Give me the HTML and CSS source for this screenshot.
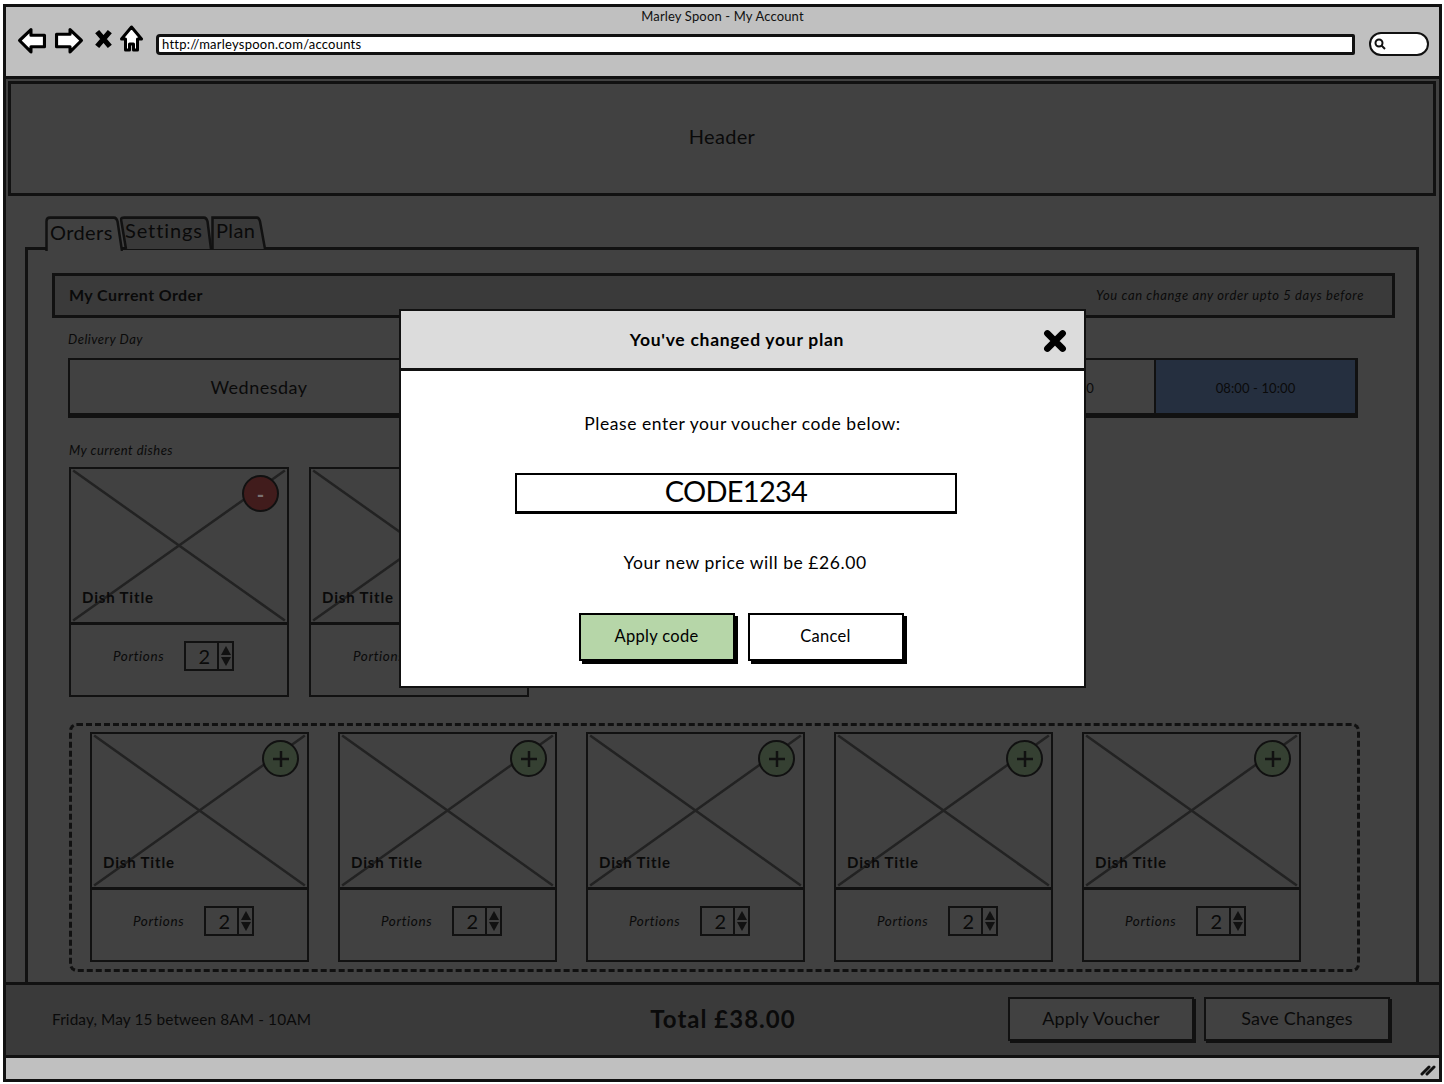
FILE: index.html
```html
<!DOCTYPE html>
<html lang="en">
<head>
<meta charset="utf-8">
<title>Marley Spoon - My Account</title>
<link rel="stylesheet" href="styles.css">
</head>
<body>
<div class="window">
  <header class="browser">
    <div class="browser-title">Marley Spoon - My Account</div>
    <div class="browser-row">
      <svg class="nav-icon back" viewBox="0 0 28 26"><path d="M2 13 13 2.500V8H26V19H13V24Z"/></svg>
      <svg class="nav-icon forward" viewBox="0 0 28 26"><path d="M26 13 15 2.500V7H2V19H15V24Z"/></svg>
      <svg class="nav-icon stop" viewBox="0 0 18 20"><path class="cross" d="M3 3 15 17M15 3 3 17"/></svg>
      <svg class="nav-icon home" viewBox="0 0 24 28"><path d="M12 2 22 14H18V25H14V19H10V25H6V14H2Z"/></svg>
      <div class="url">http://marleyspoon.com/accounts</div>
      <div class="search"><svg class="search-icon" viewBox="0 0 14 14"><circle cx="6" cy="6" r="3.500"/><path d="M8.500 8.500 12 12"/></svg></div>
    </div>
  </header>

  <main class="page">
    <div class="site-header">Header</div>

    <nav class="tabs">
      <div class="tab tab-orders"><svg class="tab-shape" viewBox="0 0 78 33" preserveAspectRatio="none"><path d="M1.500 33V5Q1.500 1.500 5 1.500H69Q71.500 1.500 72.500 5L77 33"/></svg><span class="tab-label">Orders</span></div>
      <div class="tab tab-settings"><svg class="tab-shape" viewBox="0 0 92 31" preserveAspectRatio="none"><path d="M6 31 1 3Q1 1.500 4 1.500H84Q86.500 1.500 87.500 5L91 31"/></svg><span class="tab-label">Settings</span></div>
      <div class="tab tab-plan"><svg class="tab-shape" viewBox="0 0 55 31" preserveAspectRatio="none"><path d="M1.500 31V1.500H46Q48 1.500 49 5L54 31"/></svg><span class="tab-label">Plan</span></div>
    </nav>

    <section class="panel">
      <div class="order-bar">
        <strong class="order-title">My Current Order</strong>
        <em class="order-note">You can change any order upto 5 days before</em>
      </div>

      <div class="field-label delivery-label">Delivery Day</div>
      <div class="day-row">
        <div class="segment seg-day">Wednesday</div>
        <div class="segment seg-mid">Thursday</div>
        <div class="segment seg-time">06:00 - 08:00</div>
        <div class="segment seg-active">08:00 - 10:00</div>
      </div>

      <div class="field-label dishes-label">My current dishes</div>
      <div class="current-dishes">
        <article class="dish dish-wide">
          <div class="dish-image">
            <svg class="placeholder" viewBox="0 0 100 100" preserveAspectRatio="none"><path d="M1 1 99 99M99 1 1 99"/></svg>
            <span class="badge badge-remove">-</span>
            <span class="dish-title">Dish Title</span>
          </div>
          <div class="dish-foot"><em class="portions">Portions</em><div class="spinner"><span class="spin-value">2</span><span class="spin-arrows"><i class="up"></i><i class="down"></i></span></div></div>
        </article>
        <article class="dish dish-wide">
          <div class="dish-image">
            <svg class="placeholder" viewBox="0 0 100 100" preserveAspectRatio="none"><path d="M1 1 99 99M99 1 1 99"/></svg>
            <span class="dish-title">Dish Title</span>
          </div>
          <div class="dish-foot"><em class="portions">Portions</em><div class="spinner"><span class="spin-value">2</span><span class="spin-arrows"><i class="up"></i><i class="down"></i></span></div></div>
        </article>
      </div>

      <div class="more-dishes">
        <article class="dish">
          <div class="dish-image">
            <svg class="placeholder" viewBox="0 0 100 100" preserveAspectRatio="none"><path d="M1 1 99 99M99 1 1 99"/></svg>
            <span class="badge badge-add"><svg class="plus" viewBox="0 0 18 18"><path d="M9 1V17M1 9H17"/></svg></span>
            <span class="dish-title">Dish Title</span>
          </div>
          <div class="dish-foot"><em class="portions">Portions</em><div class="spinner"><span class="spin-value">2</span><span class="spin-arrows"><i class="up"></i><i class="down"></i></span></div></div>
        </article>
        <article class="dish">
          <div class="dish-image">
            <svg class="placeholder" viewBox="0 0 100 100" preserveAspectRatio="none"><path d="M1 1 99 99M99 1 1 99"/></svg>
            <span class="badge badge-add"><svg class="plus" viewBox="0 0 18 18"><path d="M9 1V17M1 9H17"/></svg></span>
            <span class="dish-title">Dish Title</span>
          </div>
          <div class="dish-foot"><em class="portions">Portions</em><div class="spinner"><span class="spin-value">2</span><span class="spin-arrows"><i class="up"></i><i class="down"></i></span></div></div>
        </article>
        <article class="dish">
          <div class="dish-image">
            <svg class="placeholder" viewBox="0 0 100 100" preserveAspectRatio="none"><path d="M1 1 99 99M99 1 1 99"/></svg>
            <span class="badge badge-add"><svg class="plus" viewBox="0 0 18 18"><path d="M9 1V17M1 9H17"/></svg></span>
            <span class="dish-title">Dish Title</span>
          </div>
          <div class="dish-foot"><em class="portions">Portions</em><div class="spinner"><span class="spin-value">2</span><span class="spin-arrows"><i class="up"></i><i class="down"></i></span></div></div>
        </article>
        <article class="dish">
          <div class="dish-image">
            <svg class="placeholder" viewBox="0 0 100 100" preserveAspectRatio="none"><path d="M1 1 99 99M99 1 1 99"/></svg>
            <span class="badge badge-add"><svg class="plus" viewBox="0 0 18 18"><path d="M9 1V17M1 9H17"/></svg></span>
            <span class="dish-title">Dish Title</span>
          </div>
          <div class="dish-foot"><em class="portions">Portions</em><div class="spinner"><span class="spin-value">2</span><span class="spin-arrows"><i class="up"></i><i class="down"></i></span></div></div>
        </article>
        <article class="dish">
          <div class="dish-image">
            <svg class="placeholder" viewBox="0 0 100 100" preserveAspectRatio="none"><path d="M1 1 99 99M99 1 1 99"/></svg>
            <span class="badge badge-add"><svg class="plus" viewBox="0 0 18 18"><path d="M9 1V17M1 9H17"/></svg></span>
            <span class="dish-title">Dish Title</span>
          </div>
          <div class="dish-foot"><em class="portions">Portions</em><div class="spinner"><span class="spin-value">2</span><span class="spin-arrows"><i class="up"></i><i class="down"></i></span></div></div>
        </article>
      </div>
    </section>

    <footer class="summary">
      <div class="summary-date">Friday, May 15 between 8AM - 10AM</div>
      <div class="summary-total">Total £38.00</div>
      <div class="summary-actions">
        <div class="dark-btn">Apply Voucher</div>
        <div class="dark-btn">Save Changes</div>
      </div>
    </footer>
  </main>

  <div class="statusbar"><svg class="resize" viewBox="0 0 16 14"><path d="M2 12 9 5M7 12 14 5"/></svg></div>
</div>

<div class="modal">
  <div class="modal-head">
    <strong class="modal-title">You've changed your plan</strong>
    <svg class="modal-close" viewBox="0 0 22 22"><path d="M4 4 18 18M18 4 4 18"/></svg>
  </div>
  <div class="modal-body">
    <p class="modal-text prompt">Please enter your voucher code below:</p>
    <div class="code-input">CODE1234</div>
    <p class="modal-text price">Your new price will be £26.00</p>
    <div class="modal-actions">
      <div class="modal-btn apply">Apply code</div>
      <div class="modal-btn cancel">Cancel</div>
    </div>
  </div>
</div>
</body>
</html>
```
FILE: styles.css
```css
* { box-sizing: border-box; }
html, body { margin: 0; padding: 0; }
body {
  position: relative;
  width: 1444px;
  height: 1084px;
  overflow: hidden;
  background: #fff;
  color: #0a0a0a;
  font-family: Lato, "Open Sans", sans-serif;
}

.window {
  display: flex;
  flex-direction: column;
  width: 1439px;
  height: 1078px;
  margin: 4px 0 0 3px;
  border: 3px solid #111;
  background: #414141;
}

/* Browser chrome */
.browser {
  flex: 0 0 72px;
  background: #c0c0c0;
  border-bottom: 3px solid #111;
}
.browser-title {
  height: 20px;
  padding-top: 1px;
  text-align: center;
  font-size: 13px;
  line-height: 17px;
  letter-spacing: .15px;
  color: #111;
}
.browser-row {
  display: flex;
  align-items: center;
  height: 32px;
  padding-left: 11px;
}
.nav-icon { display: block; fill: #fff; stroke: #000; stroke-width: 3; stroke-linejoin: round; }
.back { width: 30px; height: 27px; margin-bottom: 6px; }
.forward { width: 30px; height: 27px; margin-left: 7px; margin-bottom: 6px; }
.stop { width: 19px; height: 22px; margin-left: 10px; margin-bottom: 8px; }
.stop .cross { fill: none; stroke-width: 5; }
.home { width: 25px; height: 28px; margin-left: 6px; margin-top: -3px; margin-bottom: 6px; }
.url {
  width: 1199px;
  height: 21px;
  margin-left: 12px;
  margin-top: 2px;
  padding-left: 3px;
  border: 3px solid #111;
  border-radius: 4px 2px 2px 4px;
  background: #fff;
  font-size: 13px;
  line-height: 15px;
  letter-spacing: .24px;
  color: #000;
}
.search {
  display: flex;
  align-items: center;
  width: 60px;
  height: 24px;
  margin-left: 14px;
  margin-top: 2px;
  padding-left: 2px;
  border: 2px solid #111;
  border-radius: 12px;
  background: #fff;
}
.search-icon { width: 14px; height: 14px; fill: none; stroke: #111; stroke-width: 2; }

/* Dimmed page */
.page {
  flex: 1;
  display: flex;
  flex-direction: column;
  min-height: 0;
  padding-top: 2px;
}
.site-header {
  flex: 0 0 115px;
  margin: 0 3px 0 2px;
  border: 3px solid #111;
  text-align: center;
  font-size: 20px;
  line-height: 105px;
  letter-spacing: .3px;
}

.tabs {
  display: flex;
  align-items: flex-end;
  height: 34px;
  margin: 19px 0 0 39px;
  position: relative;
  z-index: 1;
}
.tab { position: relative; height: 33px; font-size: 20px; letter-spacing: .4px; }
.tab-shape { position: absolute; left: 0; top: 0; width: 100%; height: 100%; display: block; stroke: #111; stroke-width: 2.500; }
.tab-label { position: relative; display: block; padding-left: 5px; line-height: 29px; }
.tab-orders { width: 78px; height: 35px; margin-bottom: -2px; }
.tab-orders .tab-label { padding-top: 2px; }
.tab-orders .tab-shape { fill: #414141; }
.tab-settings { width: 92px; margin-left: -3px; letter-spacing: .9px; }
.tab-plan { width: 55px; margin-left: -1px; }
.tab-settings .tab-shape, .tab-plan .tab-shape { fill: #393939; }

.panel {
  flex: 1;
  min-height: 0;
  overflow: hidden;
  margin: -2px 20px 0 19px;
  padding: 23px 21px 0 24px;
  border: 3px solid #111;
  border-bottom: 0;
}

.order-bar {
  display: flex;
  justify-content: space-between;
  align-items: center;
  height: 45px;
  padding: 0 28px 2px 14px;
  border: 3px solid #111;
  background: #3a3a3a;
}
.order-title { font-size: 16px; font-weight: 700; letter-spacing: .4px; }
.order-note { font-size: 13px; letter-spacing: .62px; }

.field-label { font-size: 13px; line-height: 16px; font-style: italic; margin-left: 16px; letter-spacing: .5px; }
.delivery-label { margin-top: 13px; }
.dishes-label { margin-top: 24px; margin-left: 17px; }

.day-row {
  display: flex;
  width: 1290px;
  height: 60px;
  margin: 11px 0 0 16px;
  border: 2px solid #111;
  border-bottom-width: 5px;
  border-right-width: 3px;
}
.segment {
  display: flex;
  align-items: center;
  justify-content: center;
  padding-top: 2px;
  border-right: 2px solid #111;
  font-size: 13px;
  letter-spacing: .1px;
}
.seg-day { width: 380px; font-size: 18px; letter-spacing: .5px; padding-top: 1px; }
.seg-mid { width: 504px; }
.seg-time { width: 202px; }
.seg-active { flex: 1; background: #252f3f; border-right: 0; }

.current-dishes {
  display: flex;
  gap: 20px;
  margin: 9px 0 0 17px;
}
.more-dishes {
  display: flex;
  gap: 29px;
  width: 1291px;
  height: 249px;
  margin: 26px 0 0 17px;
  padding: 6px 0 0 18px;
  border: 3px dashed #111;
  border-radius: 8px;
}

.dish {
  display: flex;
  flex-direction: column;
  width: 219px;
  height: 230px;
  border: 2px solid #111;
}
.dish-wide { width: 220px; }
.dish-wide .dish-foot { padding-left: 42px; }
.dish-image {
  position: relative;
  flex: 0 0 156px;
  height: 156px;
  border-bottom: 3px solid #111;
}
.placeholder { display: block; width: 100%; height: 153px; fill: none; stroke: #222; }
.placeholder path { stroke-width: 2.500; vector-effect: non-scaling-stroke; }
.dish-title {
  position: absolute;
  left: 11px;
  bottom: 16px;
  font-size: 15px;
  font-weight: 700;
  line-height: 18px;
  letter-spacing: .85px;
}
.badge {
  position: absolute;
  top: 6px;
  right: 8px;
  display: flex;
  align-items: center;
  justify-content: center;
  width: 37px;
  height: 37px;
  border: 2px solid #111;
  border-radius: 50%;
}
.badge-remove { background: #411c1c; color: #7a7272; font-size: 20px; font-weight: 700; line-height: 1; }
.badge-add { background: #354032; }
.plus { width: 18px; height: 18px; stroke: #111; stroke-width: 2.500; fill: none; }

.dish-foot {
  flex: 1;
  display: flex;
  align-items: center;
  padding: 0 0 8px 41px;
}
.portions { width: 71px; font-size: 13.500px; letter-spacing: .6px; }
.spinner {
  display: flex;
  width: 50px;
  height: 30px;
  border: 2px solid #111;
}
.spin-value { flex: 1; text-align: right; padding-right: 7px; font-size: 20px; line-height: 26px; }
.spin-arrows {
  display: flex;
  flex-direction: column;
  align-items: center;
  justify-content: center;
  gap: 2px;
  width: 15px;
  border-left: 2px solid #111;
}
.up, .down { display: block; width: 0; height: 0; border-left: 5px solid transparent; border-right: 5px solid transparent; }
.up { border-bottom: 9px solid #111; }
.down { border-top: 9px solid #111; }

/* Summary bar */
.summary {
  flex: 0 0 76px;
  display: grid;
  grid-template-columns: 1fr auto 1fr;
  align-items: center;
  padding: 0 49px 3px 46px;
  background: #3a3a3a;
  border-top: 3px solid #111;
  border-bottom: 3px solid #111;
}
.summary-date { font-size: 15.400px; letter-spacing: .1px; }
.summary-total { font-size: 24px; font-weight: 700; letter-spacing: 1px; margin-left: 4px; }
.summary-actions { display: flex; justify-content: flex-end; gap: 10px; }
.dark-btn {
  width: 186px;
  height: 44px;
  border: 2px solid #111;
  background: #414141;
  box-shadow: 2px 2px 0 #111;
  text-align: center;
  font-size: 18px;
  line-height: 38px;
  letter-spacing: .2px;
}

.statusbar {
  flex: 0 0 21px;
  display: flex;
  justify-content: flex-end;
  align-items: center;
  padding-right: 3px;
  background: #c0c0c0;
}
.resize { width: 16px; height: 14px; fill: none; stroke: #111; stroke-width: 3; stroke-linecap: round; }

/* Modal */
.modal {
  position: absolute;
  left: 399px;
  top: 309px;
  width: 687px;
  height: 379px;
  display: flex;
  flex-direction: column;
  border: 2px solid #111;
  background: #fff;
  color: #000;
}
.modal-head {
  position: relative;
  flex: 0 0 60px;
  display: flex;
  align-items: center;
  justify-content: center;
  padding-right: 11px;
  background: #dcdcdc;
  border-bottom: 3px solid #111;
}
.modal-title { font-size: 17.500px; font-weight: 700; letter-spacing: .72px; }
.modal-close { position: absolute; right: 17px; top: 18px; width: 24px; height: 24px; fill: none; stroke: #000; stroke-width: 6; stroke-linecap: round; }
.modal-body {
  flex: 1;
  display: flex;
  flex-direction: column;
  align-items: center;
}
.modal-text { margin: 0; font-size: 17.500px; line-height: 22px; letter-spacing: .56px; }
.prompt { margin-top: 42px; }
.code-input {
  width: 442px;
  height: 41px;
  margin-top: 38px;
  margin-right: 13px;
  border: 2px solid #000;
  border-bottom-width: 3px;
  text-align: center;
  font-size: 29px;
  line-height: 32px;
  letter-spacing: -.75px;
}
.price { margin-top: 38px; margin-left: 5px; }
.modal-actions { display: flex; gap: 13px; margin-top: 39px; margin-left: -3px; }
.modal-btn {
  width: 156px;
  height: 48px;
  border: 2px solid #000;
  box-shadow: 3px 3px 0 #000;
  text-align: center;
  font-size: 16.500px;
  line-height: 43px;
  letter-spacing: .3px;
}
.apply { background: #b6d6a8; }
.cancel { background: #fff; }
```
